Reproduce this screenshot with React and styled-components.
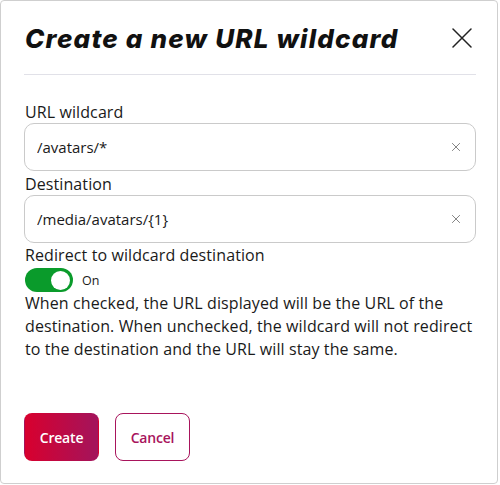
import React, { useState } from 'react'
import styled, { createGlobalStyle } from 'styled-components'

const GlobalStyle = createGlobalStyle`
    html, body {
        margin: 0;
        padding: 0;
        background: #ffffff;
    }
    body {
        font-family: "Open Sans", "Liberation Sans", sans-serif;
        color: #1a1a1a;
    }
    * {
        box-sizing: border-box;
    }
`

const Modal = styled.div`
    width: 498px;
    height: 484px;
    border: 1px solid #cfcfcf;
    border-radius: 4px;
    padding: 0 21px 0 23px;
    display: flex;
    flex-direction: column;
    background: #fff;
`

const Header = styled.header`
    flex-shrink: 0;
    display: flex;
    justify-content: space-between;
    align-items: center;
    height: 74px;
    padding-top: 1px;
    border-bottom: 1px solid #e1e1e8;
`

const Title = styled.h1`
    margin: 0;
    font-family: "Inter", "Liberation Sans", sans-serif;
    font-style: italic;
    font-weight: 800;
    font-size: 26px;
    letter-spacing: 1.2px;
    color: #111;
    padding-left: 1px;
`

const CloseButton = styled.button`
    border: none;
    background: none;
    padding: 0;
    width: 22px;
    height: 22px;
    margin-right: 3px;
    display: flex;
    align-items: center;
    justify-content: center;
    cursor: pointer;
`

const Form = styled.form`
    display: flex;
    flex-direction: column;
    padding-top: 26px;
`

const Label = styled.label`
    font-size: 16px;
    line-height: 22px;
    letter-spacing: 0.1px;
    margin: 0 0 0 1px;
`

const InputBox = styled.div`
    flex-shrink: 0;
    display: flex;
    align-items: center;
    height: 48px;
    border: 1px solid #cacaca;
    border-radius: 10px;
    padding: 0 15px 0 12px;
    margin-bottom: ${p => p.gap ?? 2}px;
`

const TextField = styled.input.attrs({ type: 'text' })`
    flex: 1;
    border: none;
    outline: none;
    background: none;
    font-family: "Open Sans", "Liberation Sans", sans-serif;
    font-size: 15px;
    color: #1a1a1a;
    padding: 0;
`

const ClearButton = styled.button`
    border: none;
    background: none;
    padding: 0;
    display: flex;
    cursor: pointer;
`

const ToggleRow = styled.div`
    display: flex;
    align-items: center;
    gap: 9px;
    margin: 2px 0 0 1px;
`

const Track = styled.div`
    width: 48px;
    height: 24px;
    border-radius: 12px;
    background: ${p => (p.on ? '#0a9b2b' : '#bbb')};
    display: flex;
    align-items: center;
    justify-content: ${p => (p.on ? 'flex-end' : 'flex-start')};
    padding: 0 3px;
    cursor: pointer;
`

const Knob = styled.div`
    width: 19px;
    height: 19px;
    border-radius: 50%;
    background: #fff;
`

const ToggleText = styled.span`
    font-size: 12.5px;
`

const Help = styled.p`
    margin: 0 0 0 1px;
    font-size: 16px;
    line-height: 23px;
    letter-spacing: 0.1px;
`

const Actions = styled.div`
    display: flex;
    gap: 16px;
    margin-top: 52px;
`

const Button = styled.button`
    width: 75px;
    height: 48px;
    padding: 0;
    border-radius: 8px;
    font-family: "Open Sans", "Liberation Sans", sans-serif;
    font-weight: 600;
    font-size: 14px;
    letter-spacing: -0.2px;
    cursor: pointer;
    border: 1px solid ${p => (p.primary ? 'transparent' : '#a8145c')};
    color: ${p => (p.primary ? '#fff' : '#a8145c')};
    background: ${p => (p.primary ? 'linear-gradient(90deg, #d8002e 0%, #a3145c 100%)' : '#fff')};
`

const CrossIcon = ({ size, stroke, color }) => (
    <svg width={size} height={size} viewBox="0 0 20 20" fill="none" stroke={color} strokeWidth={stroke} strokeLinecap="round">
        <path d="M1 1 L19 19 M19 1 L1 19" />
    </svg>
)

const Field = ({ label, value, gap }) => {
    const [text, setText] = useState(value)
    return (
        <>
            <Label>{label}</Label>
            <InputBox gap={gap}>
                <TextField value={text} onChange={e => setText(e.target.value)} />
                <ClearButton type="button" onClick={() => setText('')}>
                    <CrossIcon size={8} stroke={1.8} color="#555" />
                </ClearButton>
            </InputBox>
        </>
    )
}

const App = () => {
    const [on, setOn] = useState(true)
    return (
        <Modal>
            <GlobalStyle />
            <Header>
                <Title>Create a new URL wildcard</Title>
                <CloseButton type="button">
                    <CrossIcon size={20} stroke={1.5} color="#222" />
                </CloseButton>
            </Header>
            <Form onSubmit={e => e.preventDefault()}>
                <Field label="URL wildcard" value="/avatars/*" />
                <Field label="Destination" value="/media/avatars/{1}" gap={1} />
                <Label>Redirect to wildcard destination</Label>
                <ToggleRow>
                    <Track on={on} onClick={() => setOn(!on)}>
                        <Knob />
                    </Track>
                    <ToggleText>{on ? 'On' : 'Off'}</ToggleText>
                </ToggleRow>
                <Help>
                    When checked, the URL displayed will be the URL of the destination. When unchecked, the wildcard will not redirect to the destination and the URL will stay the same.
                </Help>
                <Actions>
                    <Button primary type="submit">Create</Button>
                    <Button type="button">Cancel</Button>
                </Actions>
            </Form>
        </Modal>
    )
}

export default App
